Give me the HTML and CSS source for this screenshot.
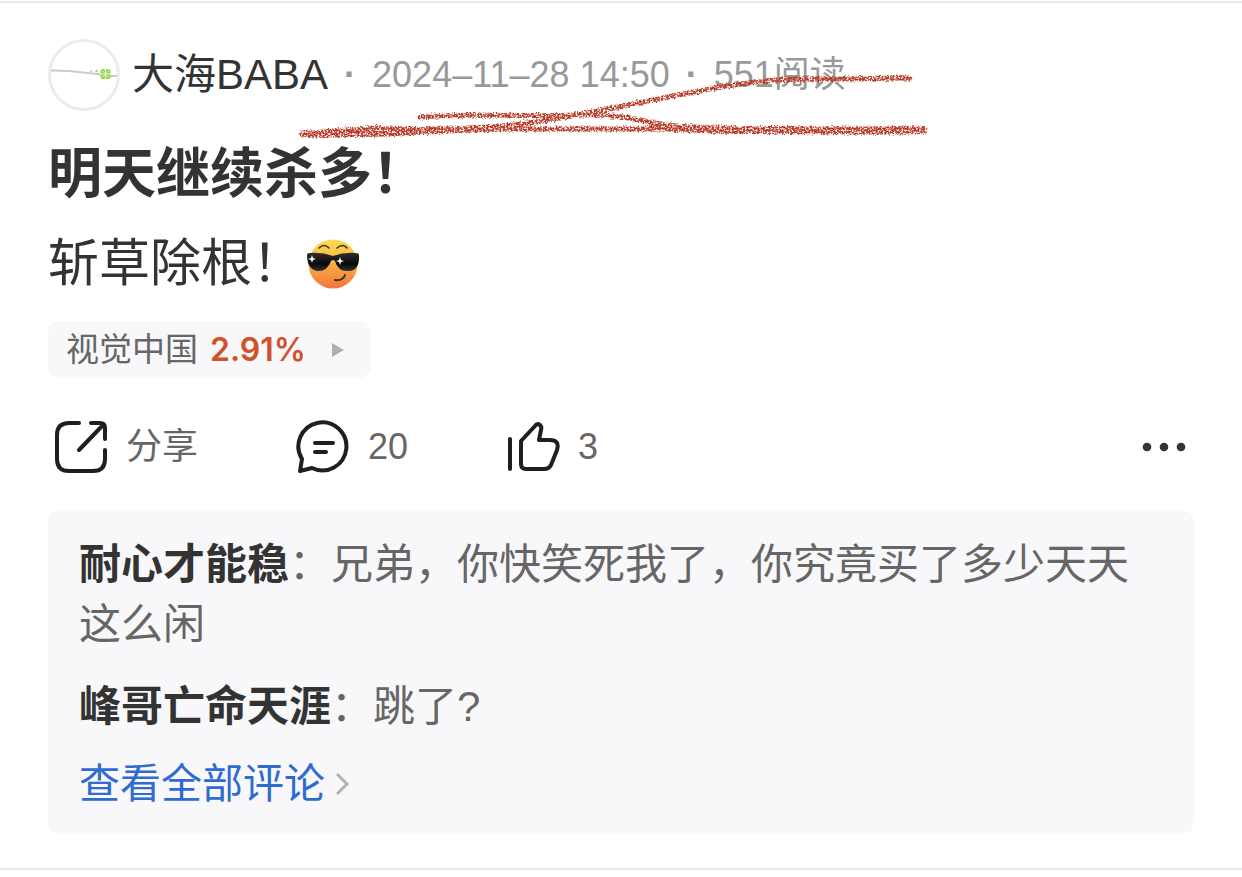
FILE: index.html
```
<!DOCTYPE html>
<html lang="zh-CN">
<head>
    <meta charset="UTF-8">
    <meta name="viewport" content="width=device-width, initial-scale=1.0">
    <title>明天继续杀多！</title>
    <link rel="stylesheet" href="styles.css">
</head>
<body>
    <article class="post">
        <header class="post-header">
            <svg class="avatar" viewBox="0 0 72 72" aria-hidden="true">
                <circle cx="36" cy="36" r="34.5" fill="#fff" stroke="#ececec" stroke-width="3"/>
                <path d="M3 31.500C18 31 31 33 45 34.500S61 37 69 37" fill="none" stroke="#c9ccc8" stroke-width="2"/>
                <circle cx="43" cy="32" r="1" fill="#b5c9a0"/>
                <circle cx="48.500" cy="32" r="1.300" fill="#a5dc67"/>
                <g fill="#8fd643">
                    <circle cx="55" cy="32.500" r="2.600"/>
                    <circle cx="60" cy="32.500" r="2.600"/>
                    <circle cx="55" cy="37.500" r="2.600"/>
                    <circle cx="60" cy="37.500" r="2.600"/>
                </g>
                <path d="M57.500 29V41M52 35H63M54 31.500L61 38.500M61 31.500L54 38.500" stroke="#e5f7d2" stroke-width="1"/>
            </svg>
            <span class="author">大海BABA</span>
            <span class="dot">·</span>
            <time class="meta" datetime="2024-11-28T14:50">2024–11–28 14:50</time>
            <span class="dot">·</span>
            <span class="meta">551阅读</span>

            <svg class="scribble" viewBox="0 0 640 70" aria-hidden="true">
                <filter id="crayon" x="0" y="0" width="640" height="70" filterUnits="userSpaceOnUse" color-interpolation-filters="sRGB">
                    <feTurbulence type="fractalNoise" baseFrequency="0.55" numOctaves="2" seed="4" result="noise"/>
                    <feDisplacementMap in="SourceGraphic" in2="noise" scale="5" xChannelSelector="R" yChannelSelector="G" result="rough"/>
                    <feColorMatrix in="noise" type="matrix" values="0 0 0 0 0  0 0 0 0 0  0 0 0 0 0  0 0 4 0 -1.200" result="grain"/>
                    <feComposite in="rough" in2="grain" operator="in"/>
                </filter>
                <g filter="url(#crayon)" fill="none" stroke="#b83a26" stroke-linecap="round">
                    <path d="M4 64C40 61 60 57 95 59S170 59 225 59S340 59 405 59" stroke-width="5"/>
                    <path d="M4 64C80 66 160 61 215 55C265 49 300 41 350 31S455 9 508 9S585 8 612 8" stroke-width="5"/>
                    <path d="M122 47C170 43 220 47 280 45S350 57 410 60S510 60 625 60" stroke-width="5"/>
                    <path d="M355 56C400 60 430 60 480 60S580 61 625 60" stroke-width="8"/>
                    <path d="M5 64C60 64 110 62 190 58" stroke-width="7"/>
                </g>
            </svg>
        </header>

        <h1 class="title">明天继续杀多！</h1>

        <p class="body-text">
            <span>斩草除根！</span>
            <svg class="emoji" viewBox="0 0 54 54" role="img" aria-label="得意">
                <defs>
                    <linearGradient id="face" x1="0" y1="0" x2="0" y2="1">
                        <stop offset="0" stop-color="#fbdc55"/>
                        <stop offset="0.45" stop-color="#f9b443"/>
                        <stop offset="1" stop-color="#f2743c"/>
                    </linearGradient>
                    <linearGradient id="lens" x1="0" y1="0" x2="0" y2="1">
                        <stop offset="0" stop-color="#303030"/>
                        <stop offset="0.6" stop-color="#080808"/>
                        <stop offset="1" stop-color="#333"/>
                    </linearGradient>
                </defs>
                <circle cx="27" cy="27" r="24.500" fill="url(#face)"/>
                <path d="M13 11Q18 6 23 11M31 11Q37 6 41 11" fill="none" stroke="#4a2a12" stroke-width="1.600" stroke-linecap="round"/>
                <path d="M1 18Q1 16 4 16Q16 15 27 19Q38 15 50 16Q53 16 53 18Q54 33 43 34Q32 35 29 24Q27 22 25 24Q21 35 11 34Q1 32 1 18Z" fill="url(#lens)"/>
                <path d="M6 18L7 21L10 22L7 23L6 26L5 23L2 22L5 21ZM34 20L35 23L38 24L35 25L34 28L33 25L30 24L33 23Z" fill="#fff"/>
                <path d="M29 43Q37 44 39 38" fill="none" stroke="#4a2a12" stroke-width="2" stroke-linecap="round"/>
            </svg>
        </p>

        <a class="stock" href="#">
            <span class="stock-name">视觉中国</span>
            <span class="stock-change">2.91%</span>
            <svg class="stock-arrow" viewBox="0 0 12 16" aria-hidden="true">
                <path d="M0 1L12 8L0 15Z" fill="#b0b0b2"/>
            </svg>
        </a>

        <div class="actions">
            <button type="button" class="action share">
                <svg class="icon" viewBox="0 0 54 54" aria-hidden="true">
                    <path d="M25 3H15Q3 3 3 15V39Q3 51 15 51H39Q51 51 51 39V30M51 19V8Q51 3 46 3H37M49 5L25 30"/>
                </svg>
                <span>分享</span>
            </button>
            <button type="button" class="action comment" aria-label="评论 20">
                <svg class="icon" viewBox="0 0 54 54" aria-hidden="true">
                    <path d="M4 51L6 39A24 24 0 1 1 16 48ZM19 23H37M19 32H30"/>
                </svg>
                <span>20</span>
            </button>
            <button type="button" class="action like" aria-label="赞 3">
                <svg class="icon" viewBox="0 0 54 54" aria-hidden="true">
                    <path d="M4 19V49M15 21L29 6Q31 3 34 5Q36 7 35 10L33 20H44Q54 20 51 30L45 45Q43 49 38 49H20Q15 49 15 44Z"/>
                </svg>
                <span>3</span>
            </button>
            <button type="button" class="more" aria-label="更多">
                <svg viewBox="0 0 44 12" aria-hidden="true">
                    <circle cx="5" cy="6" r="4.300"/>
                    <circle cx="22" cy="6" r="4.300"/>
                    <circle cx="39" cy="6" r="4.300"/>
                </svg>
            </button>
        </div>

        <section class="comments">
            <p class="reply"><b>耐心才能稳</b>：兄弟，你快笑死我了，你究竟买了多少天天这么闲</p>
            <p class="reply"><b>峰哥亡命天涯</b>：跳了?</p>
            <a class="view-all" href="#">
                <span>查看全部评论</span>
                <svg viewBox="0 0 14 24" aria-hidden="true">
                    <path d="M2 2L12 12L2 22" fill="none" stroke="#b3b3b5" stroke-width="3"/>
                </svg>
            </a>
        </section>
    </article>
</body>
</html>
```
FILE: styles.css
```
* {
    margin: 0;
    padding: 0;
    box-sizing: border-box;
}

body {
    background-color: #fff;
    color: #333;
    font-family: "Liberation Sans", "Noto Sans CJK SC", sans-serif;
}

a {
    text-decoration: none;
}

button {
    border: none;
    background: none;
    font-family: inherit;
    cursor: pointer;
}

.post {
    margin-top: 1px;
    padding: 36px 48px 34px;
    border-top: 2px solid #e8e8e8;
    border-bottom: 2px solid #e8e8e8;
}

/* author line */
.post-header {
    position: relative;
    display: flex;
    align-items: center;
    height: 72px;
    color: #999;
    font-size: 36px;
    line-height: 72px;
    white-space: nowrap;
}

.avatar {
    width: 72px;
    height: 72px;
    margin-right: 12px;
    flex-shrink: 0;
}

.author {
    color: #333;
    font-size: 42px;
}

.dot {
    width: 44px;
    font-weight: 700;
    text-align: center;
}

.scribble {
    position: absolute;
    left: 250px;
    top: 31px;
    width: 640px;
    height: 70px;
    pointer-events: none;
}

/* post content */
.title {
    margin-top: 25px;
    font-size: 54px;
    font-weight: 700;
    line-height: 76px;
}

.body-text {
    display: flex;
    align-items: center;
    margin-top: 16px;
    font-size: 51px;
    line-height: 72px;
}

.emoji {
    width: 54px;
    height: 54px;
    margin-left: 3px;
}

.stock {
    display: inline-flex;
    align-items: center;
    height: 57px;
    margin-top: 21px;
    padding: 0 27px 0 18px;
    border-radius: 12px;
    background-color: #f8f8fb;
    font-size: 33px;
    line-height: 57px;
}

.stock-name {
    color: #666;
}

.stock-change {
    margin-left: 12px;
    color: #d2512b;
    font-family: Inter, sans-serif;
    font-size: 32px;
    font-weight: 600;
}

.stock-arrow {
    width: 12px;
    height: 16px;
    margin-left: 26px;
}

/* action bar */
.actions {
    display: flex;
    align-items: center;
    height: 54px;
    margin-top: 42px;
    padding: 0 8px 0 6px;
}

.action {
    display: flex;
    align-items: center;
    gap: 18px;
    color: #666;
    font-size: 36px;
    line-height: 54px;
}

.share,
.comment {
    margin-right: 98px;
}

.icon {
    width: 54px;
    height: 54px;
    fill: none;
    stroke: #1f1f1f;
    stroke-width: 4;
    stroke-linecap: round;
    stroke-linejoin: round;
}

.more {
    margin-left: auto;
}

.more svg {
    display: block;
    width: 44px;
    height: 12px;
    fill: #333;
}

/* comments */
.comments {
    margin-top: 36px;
    padding: 25px 31px 20px;
    border-radius: 12px;
    background-color: #f8f8fb;
}

.reply {
    color: #666;
    font-size: 42px;
    line-height: 60px;
}

.reply + .reply {
    margin-top: 22px;
}

.reply b {
    color: #333;
}

.view-all {
    display: inline-flex;
    align-items: center;
    gap: 10px;
    margin-top: 17px;
    color: #2f6bd0;
    font-size: 41px;
    line-height: 60px;
}

.view-all svg {
    width: 14px;
    height: 24px;
}
```
